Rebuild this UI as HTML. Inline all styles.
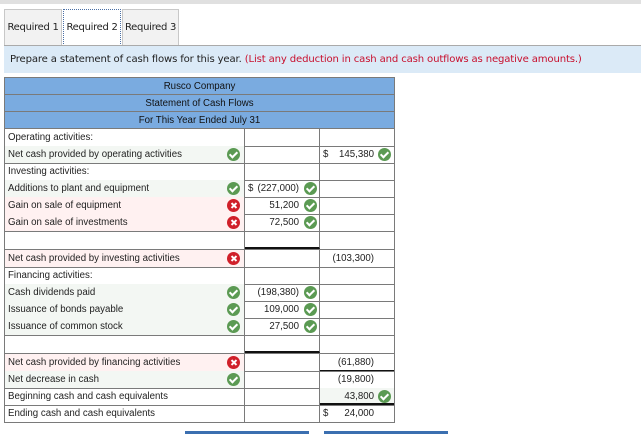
<!DOCTYPE html>
<html><head><style>
*{margin:0;padding:0;box-sizing:border-box}
body{width:641px;height:434px;background:#fff;position:relative;overflow:hidden;font-family:"Liberation Sans",Arial,sans-serif}
.a{position:absolute}
.tab{position:absolute;top:9px;height:37px;border:1px solid #c8c8c8;border-bottom:none;background:#f2f2f2;font:10px "DejaVu Sans",Verdana,sans-serif;color:#222;text-align:center;line-height:36px;white-space:nowrap;letter-spacing:-0.3px}
.row{position:absolute;left:4px;width:391px;height:18px;border:1px solid #7a7a7a;border-top:none;font-size:9.7px;color:#222;line-height:18px}
.c1{position:absolute;left:0;top:0;width:240px;height:17px;padding-left:3px;border-right:1px solid #7a7a7a}
.c2{position:absolute;left:240px;top:0;width:75px;height:17px;border-right:1px solid #7a7a7a;text-align:right;padding-right:20px}
.c3{position:absolute;left:315px;top:0;width:74px;height:17px;text-align:right;padding-right:20px}
.ok,.no{position:absolute;width:13px;height:13px;border-radius:50%;top:2px}
.ok{background:#5b9a53}
.no{background:#d0202a}
.ok:after{content:"";position:absolute;left:4px;top:2px;width:3px;height:6px;border:solid #fff;border-width:0 2px 2px 0;transform:rotate(45deg)}
.no:before,.no:after{content:"";position:absolute;left:6px;top:3px;width:2px;height:7px;background:#fff;transform:rotate(45deg)}
.no:after{transform:rotate(-45deg)}
.g{background:#f3f7f3}.p{background:#fff1f1}
.h{position:absolute;left:4px;width:391px;height:17px;background:#7aabe0;border:1px solid #7a7a7a;border-top:none;text-align:center;font-size:9.7px;line-height:17px;color:#111}
.d{position:absolute;left:3px}
</style></head><body>
<div class="a" style="left:0;top:0;width:641px;height:4px;background:#e0e0e0"></div>
<div class="tab" style="left:4px;width:58px">Required 1</div>
<div class="tab" style="left:63px;width:58px;background:#fff;border:1px dotted #4a6fa5;border-bottom:none">Required 2</div>
<div class="tab" style="left:122px;width:57px">Required 3</div>
<div class="a" style="left:4px;top:45px;width:637px;height:1px;background:#aaa"></div>
<div class="a" style="left:4px;top:46px;width:637px;height:27px;background:#dbeaf7;font:10.1px 'DejaVu Sans',Verdana,sans-serif;line-height:27px;padding-left:6px;color:#222;white-space:nowrap;letter-spacing:-0.15px">Prepare a statement of cash flows for this year. <span style="color:#c8102e">(List any deduction in cash and cash outflows as negative amounts.)</span></div>
<div class="h" style="top:77px;border-top:1px solid #7a7a7a;height:18px">Rusco Company</div>
<div class="h" style="top:95px">Statement of Cash Flows</div>
<div class="h" style="top:112px">For This Year Ended July 31</div>

<div class="row" style="top:129px"><div class="c1">Operating activities:</div><div class="c2"></div><div class="c3"></div></div>
<div class="row" style="top:146px"><div class="c1 g">Net cash provided by operating activities<span class="ok" style="left:222px"></span></div><div class="c2"></div><div class="c3"><span class="d">$</span>145,380<span class="ok" style="left:58px"></span></div></div>
<div class="row" style="top:163px"><div class="c1">Investing activities:</div><div class="c2"></div><div class="c3"></div></div>
<div class="row" style="top:180px"><div class="c1 g">Additions to plant and equipment<span class="ok" style="left:222px"></span></div><div class="c2"><span class="d">$</span>(227,000)<span class="ok" style="left:59px"></span></div><div class="c3"></div></div>
<div class="row" style="top:197px"><div class="c1 p">Gain on sale of equipment<span class="no" style="left:222px"></span></div><div class="c2">51,200<span class="ok" style="left:59px"></span></div><div class="c3"></div></div>
<div class="row" style="top:214px"><div class="c1 p">Gain on sale of investments<span class="no" style="left:222px"></span></div><div class="c2">72,500<span class="ok" style="left:59px"></span></div><div class="c3"></div></div>
<div class="row" style="top:231px;height:19px"><div class="c1" style="height:18px"></div><div class="c2" style="height:18px;border-bottom:2px solid #111"></div><div class="c3"></div></div>
<div class="row" style="top:250px"><div class="c1 p">Net cash provided by investing activities<span class="no" style="left:222px"></span></div><div class="c2"></div><div class="c3">(103,300)</div></div>
<div class="row" style="top:267px"><div class="c1">Financing activities:</div><div class="c2"></div><div class="c3"></div></div>
<div class="row" style="top:284px"><div class="c1 g">Cash dividends paid<span class="ok" style="left:222px"></span></div><div class="c2">(198,380)<span class="ok" style="left:59px"></span></div><div class="c3"></div></div>
<div class="row" style="top:301px"><div class="c1 g">Issuance of bonds payable<span class="ok" style="left:222px"></span></div><div class="c2">109,000<span class="ok" style="left:59px"></span></div><div class="c3"></div></div>
<div class="row" style="top:318px"><div class="c1 g">Issuance of common stock<span class="ok" style="left:222px"></span></div><div class="c2">27,500<span class="ok" style="left:59px"></span></div><div class="c3"></div></div>
<div class="row" style="top:335px;height:19px"><div class="c1" style="height:18px"></div><div class="c2" style="height:18px;border-bottom:2px solid #111"></div><div class="c3"></div></div>
<div class="row" style="top:354px"><div class="c1 p">Net cash provided by financing activities<span class="no" style="left:222px"></span></div><div class="c2"></div><div class="c3" style="border-bottom:1px solid #111">(61,880)</div></div>
<div class="row" style="top:371px"><div class="c1 g">Net decrease in cash<span class="ok" style="left:222px"></span></div><div class="c2"></div><div class="c3">(19,800)</div></div>
<div class="row" style="top:388px"><div class="c1">Beginning cash and cash equivalents</div><div class="c2"></div><div class="c3 g" style="border-bottom:2px solid #111">43,800<span class="ok" style="left:58px"></span></div></div>
<div class="row" style="top:405px"><div class="c1">Ending cash and cash equivalents</div><div class="c2"></div><div class="c3"><span class="d">$</span>24,000</div></div>
<div class="a" style="left:185px;top:431px;width:124px;height:3px;background:#3b6fb0"></div>
<div class="a" style="left:324px;top:431px;width:124px;height:3px;background:#3b6fb0"></div>
</body></html>
